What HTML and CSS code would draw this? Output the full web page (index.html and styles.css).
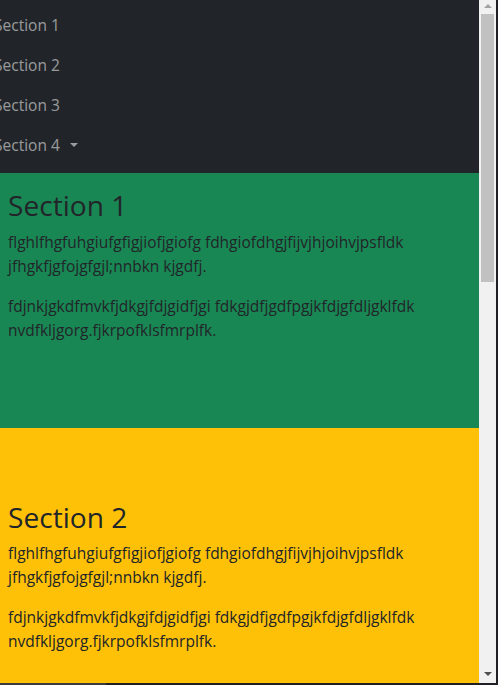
FILE: index.html
```html
<!DOCTYPE html>
<html lang="en">
<head>
<meta charset="utf-8">
<title>Scrollspy</title>
<link rel="stylesheet" href="styles.css">
</head>
<body>
<div class="window">
  <div class="page">
    <nav class="navbar">
      <ul class="nav-list">
        <li><a class="nav-link" href="#section1">Section 1</a></li>
        <li><a class="nav-link" href="#section2">Section 2</a></li>
        <li><a class="nav-link" href="#section3">Section 3</a></li>
        <li><a class="nav-link dropdown-toggle" href="#">Section 4</a></li>
      </ul>
    </nav>
    <div id="section1" class="section section-first bg-success">
      <h1 class="section-title">Section 1</h1>
      <p>flghlfhgfuhgiufgfigjiofjgiofg fdhgiofdhgjfijvjhjoihvjpsfldk jfhgkfjgfojgfgjl;nnbkn kjgdfj.</p>
      <p>fdjnkjgkdfmvkfjdkgjfdjgidfjgi fdkgjdfjgdfpgjkfdjgfdljgklfdk nvdfkljgorg.fjkrpofklsfmrplfk.</p>
    </div>
    <div id="section2" class="section bg-warning">
      <h1 class="section-title">Section 2</h1>
      <p>flghlfhgfuhgiufgfigjiofjgiofg fdhgiofdhgjfijvjhjoihvjpsfldk jfhgkfjgfojgfgjl;nnbkn kjgdfj.</p>
      <p>fdjnkjgkdfmvkfjdkgjfdjgidfjgi fdkgjdfjgdfpgjkfdjgfdljgklfdk nvdfkljgorg.fjkrpofklsfmrplfk.</p>
    </div>
  </div>
  <div class="scrollbar">
    <div class="sb-btn sb-btn-up"><span class="arrow-up"></span></div>
    <div class="sb-thumb"></div>
    <div class="sb-track"></div>
    <div class="sb-btn sb-btn-down"><span class="arrow-down"></span></div>
  </div>
</div>
<div class="hbar"><div class="hbar-part"></div></div>
</body>
</html>
```
FILE: styles.css
```css
* { box-sizing: border-box; }
html, body { height: 100%; }
body {
  margin: 0;
  background: #1f2023;
  overflow: hidden;
  display: flex;
  flex-direction: column;
  font-family: "Open Sans", "Noto Sans", sans-serif;
  font-size: 15.5px;
  line-height: 24px;
  color: #212529;
}
.window {
  height: 683px;
  width: 496px;
  display: flex;
  flex: none;
}
.page {
  flex: 1;
  min-width: 0;
  overflow: hidden;
}
.navbar {
  background: #212529;
  padding: 5px 0 8px;
}
.nav-list {
  list-style: none;
  margin: 0 0 0 -6px;
  padding: 0;
}
.nav-link {
  display: block;
  padding: 8px 0;
  color: rgba(255, 255, 255, 0.55);
  text-decoration: none;
}
.dropdown-toggle::after {
  content: "";
  display: inline-block;
  margin-left: 10px;
  vertical-align: 4px;
  border-top: 4.6px solid;
  border-left: 4.8px solid transparent;
  border-right: 4.8px solid transparent;
  border-bottom: 0;
}
.section {
  padding: 73px 8px 70px;
}
.section-first {
  padding-top: 16px;
}
.bg-success { background: #198754; }
.bg-warning { background: #ffc107; }
.section-title {
  margin: 0 0 7px;
  font-size: 28.1px;
  font-weight: 500;
  line-height: 1.2;
}
.section p {
  margin: 0 0 16px;
}
.scrollbar {
  width: 17px;
  background: #f1f1f1;
  display: flex;
  flex-direction: column;
  align-items: center;
}
.sb-btn {
  width: 100%;
  display: flex;
  justify-content: center;
}
.sb-btn-up {
  height: 14px;
  padding-top: 4px;
}
.sb-btn-down {
  height: 17px;
  padding-top: 6px;
}
.arrow-up {
  width: 0;
  height: 0;
  border-left: 4px solid transparent;
  border-right: 4px solid transparent;
  border-bottom: 4px solid #a3a3a3;
}
.arrow-down {
  width: 0;
  height: 0;
  border-left: 4px solid transparent;
  border-right: 4px solid transparent;
  border-top: 4px solid #505050;
}
.sb-thumb {
  width: 13px;
  height: 268px;
  background: #c1c1c1;
}
.sb-track {
  flex: 1;
}
.hbar {
  height: 2px;
  flex: none;
  background: #1f2023;
}
.hbar-part {
  width: 106px;
  height: 100%;
  background: #3b3b3b;
}
```
